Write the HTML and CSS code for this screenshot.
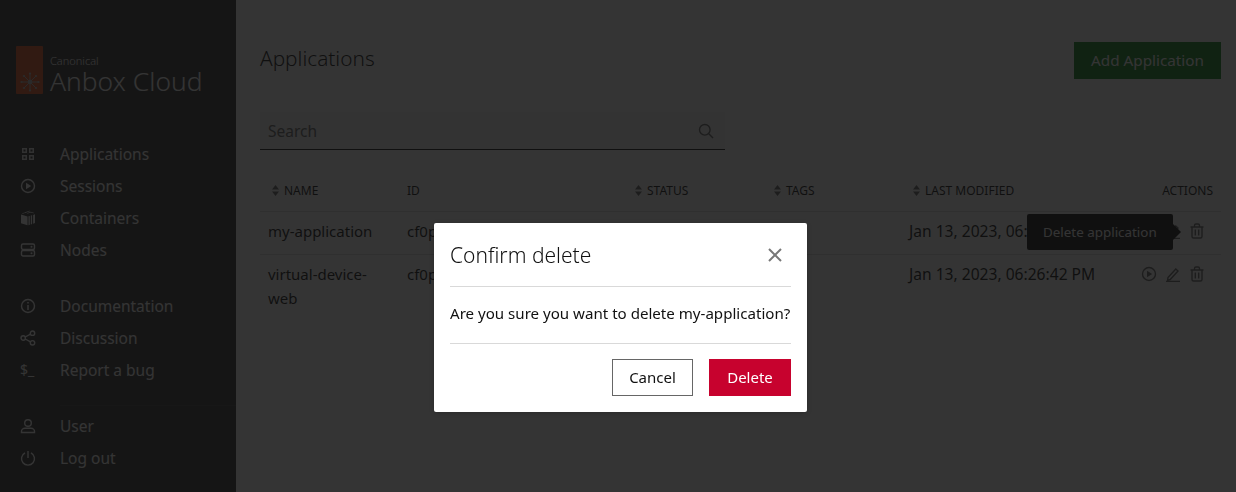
FILE: index.html
```html
<!DOCTYPE html>
<html lang="en">
<head>
  <meta charset="UTF-8" />
  <title>Anbox Cloud - Applications</title>
  <link rel="stylesheet" href="styles.css">
</head>
<body>
  <div class="app">
    <aside class="sidebar">
      <div class="brand">
        <div class="brand-tag">
          <svg class="brand-mark" viewBox="0 0 22 22" width="22" height="22">
            <g stroke="#bbb" stroke-width="1" stroke-linecap="round">
              <path d="M11 11V3M11 11v8M11 11H3M11 11h8M11 11L5.300 5.300M11 11l5.700-5.700M11 11l-5.700 5.700M11 11l5.700 5.700" />
            </g>
            <g fill="#bbb">
              <circle cx="11" cy="11" r="2.200" />
              <circle cx="11" cy="2.500" r="1.100" />
              <circle cx="11" cy="19.500" r="1.100" />
              <circle cx="2.500" cy="11" r="1.100" />
              <circle cx="19.500" cy="11" r="1.100" />
              <circle cx="5" cy="5" r="1.100" />
              <circle cx="17" cy="5" r="1.100" />
              <circle cx="5" cy="17" r="1.100" />
              <circle cx="17" cy="17" r="1.100" />
            </g>
          </svg>
        </div>
        <div class="brand-text">
          <div class="brand-small">Canonical</div>
          <div class="brand-name">Anbox Cloud</div>
        </div>
      </div>

      <nav class="nav-group">
        <a class="nav-item">
          <svg class="nav-icon" viewBox="0 0 16 16"><path fill="#fff" d="M2 2h5v5H2zM9 2h5v5H9zM2 9h5v5H2zM9 9h5v5H9z" fill-opacity=".9"/><path fill="#333" d="M3.500 3.500h2v2h-2zM10.500 3.500h2v2h-2zM3.500 10.500h2v2h-2zM10.500 10.500h2v2h-2z"/></svg>
          Applications
        </a>
        <a class="nav-item">
          <svg class="nav-icon" viewBox="0 0 16 16"><circle cx="8" cy="8" r="6.500" class="line"/><path fill="#fff" d="M6 4.800v6.400L11.200 8z"/></svg>
          Sessions
        </a>
        <a class="nav-item">
          <svg class="nav-icon" viewBox="0 0 16 16"><path fill="#fff" d="M1 4.500l6.500 2v8.800L1 13.300zM8.500 6.300l1.300-.4v8.900l-1.300.5zM10.800 5.600l1.300-.4V14l-1.300.5zM13.100 4.900l1.900-.6v8.800l-1.900.6zM1.800 3.500l5.600-2 1 .3-5.600 2zM4.400 2.600l4.900-1.800 1 .3-4.900 1.800zM6.700 3.300l4.100-1.500 3.500 1.100-1 .3-2.500-.7-3.100 1.100z"/></svg>
          Containers
        </a>
        <a class="nav-item">
          <svg class="nav-icon" viewBox="0 0 16 16"><rect x="1.500" y="2" width="13" height="5.500" rx="1.500" class="line"/><rect x="1.500" y="8.500" width="13" height="5.500" rx="1.500" class="line"/><circle cx="11.500" cy="4.700" r="1" fill="#fff"/><circle cx="11.500" cy="11.200" r="1" fill="#fff"/></svg>
          Nodes
        </a>
      </nav>

      <nav class="nav-group">
        <a class="nav-item">
          <svg class="nav-icon" viewBox="0 0 16 16"><circle cx="8" cy="8" r="6.500" class="line"/><path fill="#fff" d="M7.250 7h1.500v5h-1.500zM7.250 4h1.500v1.500h-1.500z"/></svg>
          Documentation
        </a>
        <a class="nav-item">
          <svg class="nav-icon" viewBox="0 0 16 16"><circle cx="3.200" cy="8" r="2.200" class="line"/><circle cx="12.500" cy="3.200" r="2.200" class="line"/><circle cx="12.500" cy="12.800" r="2.200" class="line"/><path class="line" d="M5.200 7l5.300-2.800M5.200 9l5.300 2.800"/></svg>
          Discussion
        </a>
        <a class="nav-item">
          <span class="nav-icon nav-icon-text">$_</span>
          Report a bug
        </a>
      </nav>

      <div class="nav-divider"></div>

      <nav class="nav-group nav-group-last">
        <a class="nav-item">
          <svg class="nav-icon" viewBox="0 0 16 16"><circle cx="8" cy="5" r="3.300" class="line"/><path class="line" d="M1.500 14.500v-1.200c0-1.500 1.500-3 3.500-3h6c2 0 3.500 1.500 3.500 3v1.200z"/></svg>
          User
        </a>
        <a class="nav-item">
          <svg class="nav-icon" viewBox="0 0 16 16"><path class="line" d="M8 1v7M5 2.900a6.500 6.500 0 1 0 6 0"/></svg>
          Log out
        </a>
      </nav>
    </aside>

    <main class="main">
      <header class="page-header">
        <h1>Applications</h1>
        <button class="btn-add" type="button">Add Application</button>
      </header>

      <div class="search">
        <span class="search-text">Search</span>
        <svg class="search-icon" viewBox="0 0 16 16" width="16" height="16"><circle cx="6.800" cy="6.800" r="5.300" class="line-dark"/><path class="line-dark" d="M10.800 10.800L15 15"/></svg>
      </div>

      <table class="apps">
        <thead>
          <tr>
            <th class="col-name"><span class="sort"><svg viewBox="0 0 7 11" width="7" height="11"><path d="M3.500 0L7 4.500H0zM3.500 11L0 6.500h7z"/></svg>Name</span></th>
            <th class="col-id">ID</th>
            <th class="col-status"><span class="sort"><svg viewBox="0 0 7 11" width="7" height="11"><path d="M3.500 0L7 4.500H0zM3.500 11L0 6.500h7z"/></svg>Status</span></th>
            <th class="col-tags"><span class="sort"><svg viewBox="0 0 7 11" width="7" height="11"><path d="M3.500 0L7 4.500H0zM3.500 11L0 6.500h7z"/></svg>Tags</span></th>
            <th class="col-date"><span class="sort"><svg viewBox="0 0 7 11" width="7" height="11"><path d="M3.500 0L7 4.500H0zM3.500 11L0 6.500h7z"/></svg>Last modified</span></th>
            <th class="col-actions">Actions</th>
          </tr>
        </thead>
        <tbody>
          <tr>
            <td>my-application</td>
            <td>cf0p</td>
            <td></td>
            <td></td>
            <td class="cell-date">Jan 13, 2023, 06:26:42 PM</td>
            <td class="col-actions">
              <div class="row-actions">
                <svg viewBox="0 0 16 16" width="16" height="16"><circle cx="8" cy="8" r="6.500" class="line-dark"/><path class="fill-dark" d="M6 4.800v6.400L11.200 8z"/></svg>
                <svg viewBox="0 0 16 16" width="16" height="16"><path class="line-dark" d="M3 11.500l7.800-8.500 2.200 2-7.800 8.500-2.600.6zM1 15.500h14"/></svg>
                <svg viewBox="0 0 16 16" width="16" height="16"><path class="line-dark" d="M1.500 4h13M5.500 4V2.500a1.500 1.500 0 0 1 1.500-1.500h2a1.500 1.500 0 0 1 1.500 1.500V4M3 4v9.500A1.500 1.500 0 0 0 4.500 15h7a1.500 1.500 0 0 0 1.500-1.500V4M6.300 6.500v6M9.700 6.500v6"/></svg>
              </div>
            </td>
          </tr>
          <tr>
            <td>virtual-device-web</td>
            <td>cf0p</td>
            <td></td>
            <td></td>
            <td class="cell-date">Jan 13, 2023, 06:26:42 PM</td>
            <td class="col-actions">
              <div class="row-actions">
                <svg viewBox="0 0 16 16" width="16" height="16"><circle cx="8" cy="8" r="6.500" class="line-dark"/><path class="fill-dark" d="M6 4.800v6.400L11.200 8z"/></svg>
                <svg viewBox="0 0 16 16" width="16" height="16"><path class="line-dark" d="M3 11.500l7.800-8.500 2.200 2-7.800 8.500-2.600.6zM1 15.500h14"/></svg>
                <svg viewBox="0 0 16 16" width="16" height="16"><path class="line-dark" d="M1.500 4h13M5.500 4V2.500a1.500 1.500 0 0 1 1.500-1.500h2a1.500 1.500 0 0 1 1.500 1.500V4M3 4v9.500A1.500 1.500 0 0 0 4.500 15h7a1.500 1.500 0 0 0 1.500-1.500V4M6.300 6.500v6M9.700 6.500v6"/></svg>
              </div>
            </td>
          </tr>
        </tbody>
      </table>

      <div class="tooltip">Delete application</div>
    </main>
  </div>

  <div class="overlay">
    <div class="modal">
      <div class="modal-header">
        <h2>Confirm delete</h2>
        <svg class="modal-close" viewBox="0 0 14 14" width="14" height="14"><path d="M1 1l12 12M13 1L1 13"/></svg>
      </div>
      <p class="modal-body">Are you sure you want to delete my-application?</p>
      <div class="modal-footer">
        <button class="btn btn-cancel" type="button">Cancel</button>
        <button class="btn btn-delete" type="button">Delete</button>
      </div>
    </div>
  </div>
</body>
</html>
```

FILE: styles.css
```css
* {
  box-sizing: border-box;
}
html, body {
  height: 100%;
}
body {
  margin: 0;
  font-family: "Noto Sans", sans-serif;
  font-size: 16px;
  line-height: 24px;
  color: #111;
  background-color: #fff;
  overflow: hidden;
}
.app {
  display: flex;
  height: 100%;
}

/* Sidebar */
.sidebar {
  width: 236px;
  flex-shrink: 0;
  background-color: #333;
  color: #fff;
}
.brand {
  display: flex;
  height: 138px;
  padding: 46px 0 0 16px;
}
.brand-tag {
  display: flex;
  justify-content: center;
  align-items: flex-end;
  width: 27px;
  height: 48px;
  padding-bottom: 1px;
  background-color: #e95420;
  border-radius: 1px;
}
.brand-text {
  margin-left: 7px;
}
.brand-small {
  font-size: 11px;
  line-height: 14px;
  margin-top: 8px;
  font-weight: 300;
}
.brand-name {
  font-size: 26.400px;
  line-height: 26px;
  font-weight: 300;
}
.nav-group {
  margin-bottom: 24px;
}
.nav-group-last {
  margin-bottom: 0;
}
.nav-item {
  display: flex;
  align-items: center;
  height: 32px;
  padding-left: 20px;
  font-size: 15.500px;
}
.nav-icon {
  width: 16px;
  height: 16px;
  margin-right: 24px;
  flex-shrink: 0;
}
.nav-icon-text {
  font-size: 14px;
  line-height: 16px;
  white-space: nowrap;
}
.nav-divider {
  height: 1px;
  margin: -5px 0 4px 60px;
  background-color: #3d3d3d;
}
.line {
  fill: none;
  stroke: #fff;
  stroke-width: 1.400;
}
.line-dark {
  fill: none;
  stroke: #666;
  stroke-width: 1.400;
}
.fill-dark {
  fill: #666;
}

/* Main column */
.main {
  position: relative;
  flex: 1;
  padding: 42px 15px 0 24px;
}
.page-header {
  display: flex;
  justify-content: space-between;
  align-items: flex-start;
}
.page-header h1 {
  margin: 0;
  font-size: 20.800px;
  line-height: 32px;
  font-weight: 300;
}
.btn-add {
  width: 147px;
  height: 37px;
  border: none;
  background-color: #0e8420;
  color: #fff;
  font: inherit;
  font-size: 15.250px;
  padding: 0 0 2px;
}
.search {
  display: flex;
  justify-content: space-between;
  align-items: center;
  width: 465px;
  height: 38px;
  margin-top: 33px;
  padding: 0 11px 0 8px;
  background-color: #f7f7f7;
  border-bottom: 1px solid #111;
}
.search-text {
  color: #666;
  font-size: 15.500px;
}

/* Table */
.apps {
  width: 961px;
  margin-top: 24px;
  border-collapse: collapse;
  table-layout: fixed;
}
.apps th {
  height: 37px;
  padding: 2px 8px 4px;
  font-size: 12px;
  font-weight: 400;
  line-height: 16px;
  text-align: left;
  text-transform: uppercase;
  border-bottom: 1px solid #d9d9d9;
}
.apps td {
  padding: 7px 8px 11px;
  font-size: 15px;
  border-bottom: 1px solid #d9d9d9;
  vertical-align: top;
  overflow: hidden;
}
.apps tbody tr:last-child td {
  border-bottom: none;
}
.col-name {
  width: 139px;
}
.col-id {
  width: 224px;
}
.col-status, .col-tags {
  width: 139px;
}
.col-date {
  width: 200px;
}
.apps .col-actions {
  text-align: right;
}
.sort {
  display: inline-flex;
  align-items: center;
  gap: 5px;
  padding-left: 4px;
}
.sort svg {
  fill: #666;
}
.apps td.cell-date {
  font-size: 15.600px;
  white-space: nowrap;
  overflow: visible;
}
.row-actions {
  display: flex;
  justify-content: flex-end;
  gap: 8px;
  height: 24px;
  margin-right: 8px;
  align-items: center;
}

/* Tooltip sits over the first row */
.tooltip {
  position: absolute;
  left: 791px;
  top: 214px;
  width: 146px;
  height: 36px;
  padding: 6px 16px;
  background-color: #111;
  color: #fff;
  font-size: 13.400px;
  border-radius: 2px;
  white-space: nowrap;
}
.tooltip::after {
  content: "";
  position: absolute;
  left: 100%;
  top: 10px;
  border: 8px solid transparent;
  border-left-color: #111;
  border-right-width: 0;
}

/* Modal */
.overlay {
  position: fixed;
  top: 0;
  right: 0;
  bottom: 0;
  left: 0;
  padding: 223px 0 0 434px;
  background-color: rgba(17, 17, 17, 0.85);
}
.modal {
  width: 373px;
  height: 189px;
  padding: 0 16px;
  background-color: #fff;
  border-radius: 2px;
  box-shadow: 0 1px 5px rgba(0, 0, 0, 0.2);
}
.modal-header {
  display: flex;
  justify-content: space-between;
  align-items: center;
  height: 64px;
  border-bottom: 1px solid #d9d9d9;
}
.modal-header h2 {
  margin: 0;
  font-size: 21px;
  font-weight: 300;
  line-height: 64px;
}
.modal-close {
  margin-right: 9px;
}
.modal-close path {
  fill: none;
  stroke: #777;
  stroke-width: 2;
}
.modal-body {
  margin: 0;
  height: 57px;
  padding-top: 14px;
  font-size: 15.100px;
  border-bottom: 1px solid #d9d9d9;
  white-space: nowrap;
}
.modal-footer {
  display: flex;
  justify-content: flex-end;
  gap: 16px;
  padding-top: 15px;
}
.btn {
  width: 82px;
  height: 37px;
  padding: 0 0 1px;
  font: inherit;
  font-size: 15px;
}
.btn-cancel {
  width: 81px;
  background-color: #fff;
  border: 1px solid #666;
  color: #111;
}
.btn-delete {
  background-color: #c7022e;
  border: none;
  color: #fff;
}
```
